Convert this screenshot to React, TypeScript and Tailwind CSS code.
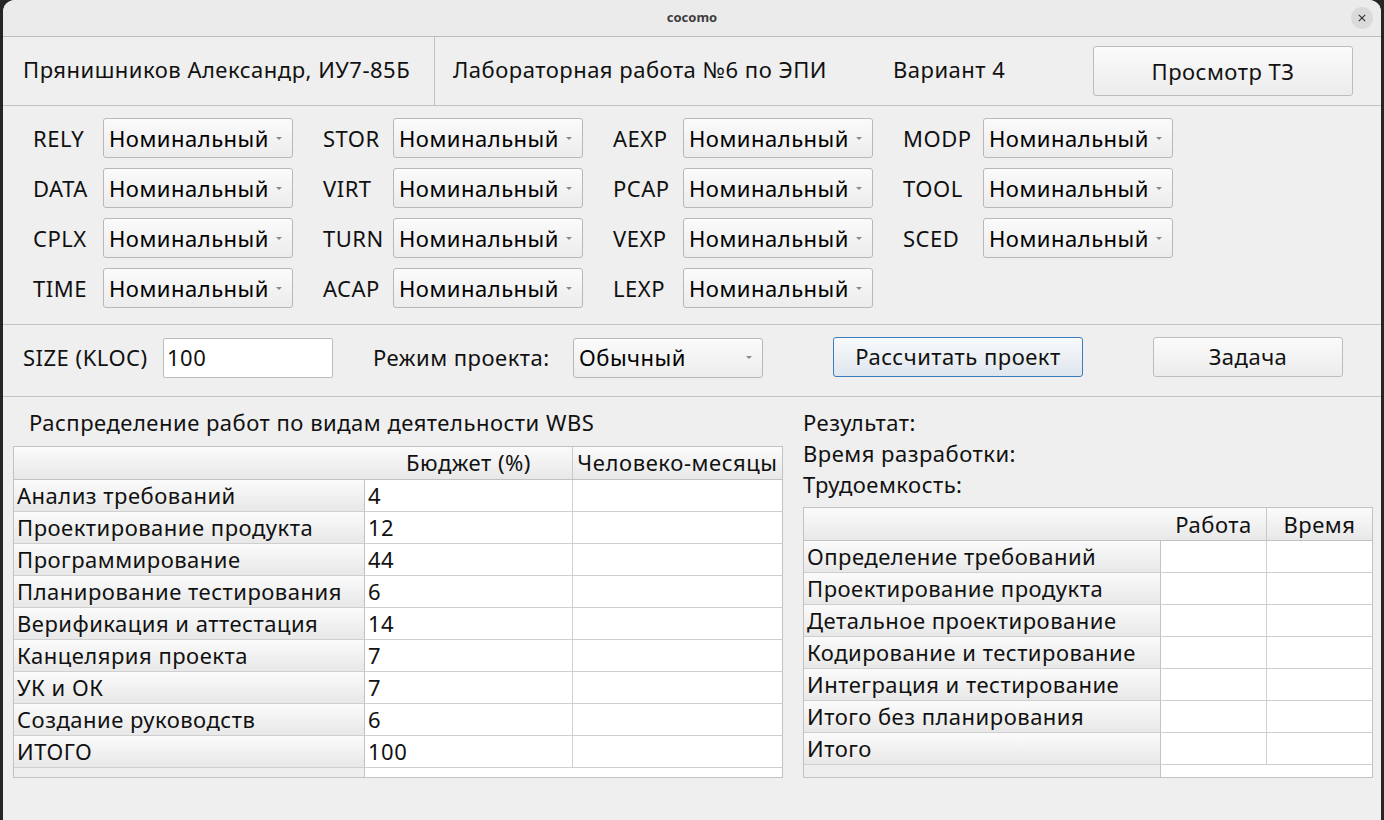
import React from 'react';

const font = { fontFamily: '"Noto Sans", "DejaVu Sans", sans-serif' };

function Combo({ value, width = 'w-[190px]' }: { value: string; width?: string }) {
  return (
    <div
      className={`${width} h-[40px] flex items-center justify-between pl-[5px] pr-[10px] rounded-[3px] border border-[#b8b8b8] bg-gradient-to-b from-[#fbfbfb] to-[#ececec] text-black`}
    >
      <span className="whitespace-nowrap">{value}</span>
      <span className="w-0 h-0 border-l-[3px] border-r-[3px] border-t-[3px] border-l-transparent border-r-transparent border-t-[#8a8a8a]" />
    </div>
  );
}

function Param({ label, labelW = 'w-[70px]' }: { label: string; labelW?: string }) {
  return (
    <div className="flex items-center">
      <span className={`${labelW}`}>{label}</span>
      <Combo value="Номинальный" />
    </div>
  );
}

const columns: string[][] = [
  ['RELY', 'DATA', 'CPLX', 'TIME'],
  ['STOR', 'VIRT', 'TURN', 'ACAP'],
  ['AEXP', 'PCAP', 'VEXP', 'LEXP'],
  ['MODP', 'TOOL', 'SCED'],
];

const wbs: [string, string][] = [
  ['Анализ требований', '4'],
  ['Проектирование продукта', '12'],
  ['Программирование', '44'],
  ['Планирование тестирования', '6'],
  ['Верификация и аттестация', '14'],
  ['Канцелярия проекта', '7'],
  ['УК и ОК', '7'],
  ['Создание руководств', '6'],
  ['ИТОГО', '100'],
];

const stages = [
  'Определение требований',
  'Проектирование продукта',
  'Детальное проектирование',
  'Кодирование и тестирование',
  'Интеграция и тестирование',
  'Итого без планирования',
  'Итого',
];

const headCell = 'bg-gradient-to-b from-[#fbfbfb] to-[#e8e8e8]';

export default function App() {
  return (
    <div className="w-[1384px] h-[820px] bg-[#262626] flex px-[3px] overflow-hidden text-[#111]" style={font}>
      <div className="flex-1 flex flex-col bg-[#efefef] rounded-t-[12px] overflow-hidden text-[22px] tracking-[0.5px]">
        {/* title bar */}
        <div className="h-[37px] shrink-0 flex items-center justify-center relative bg-[#ebebeb] border-b border-[#bcbcbc] tracking-normal">
          <span className="text-[13px] font-bold text-[#3d3d3d]">cocomo</span>
          <div className="absolute right-[8px] top-[7px] w-[22px] h-[22px] rounded-full bg-[#dadada] flex items-center justify-center">
            <svg viewBox="0 0 10 10" className="w-[8px] h-[8px]" stroke="#333" strokeWidth="1.4">
              <line x1="1" y1="1" x2="9" y2="9" />
              <line x1="9" y1="1" x2="1" y2="9" />
            </svg>
          </div>
        </div>

        {/* header */}
        <div className="h-[69px] shrink-0 flex items-center border-b border-[#c2c2c2]">
          <div className="w-[432px] h-full flex items-center pl-[20px] pb-[4px] border-r border-[#c2c2c2] whitespace-nowrap">
            Прянишников Александр, ИУ7-85Б
          </div>
          <div className="pl-[18px] w-[458px] pb-[4px] whitespace-nowrap">Лабораторная работа №6 по ЭПИ</div>
          <div className="w-[200px] pb-[4px]">Вариант 4</div>
          <button className="w-[260px] h-[50px] rounded-[3px] border border-[#bdbdbd] bg-gradient-to-b from-[#fbfbfb] to-[#ececec]">
            Просмотр ТЗ
          </button>
        </div>

        {/* parameters */}
        <div className="h-[219px] shrink-0 flex pl-[30px] pt-[12px] border-b border-[#c2c2c2]">
          {columns.map((col, i) => (
            <div key={i} className={`flex flex-col gap-[10px] ${i < 3 ? 'w-[290px]' : ''}`}>
              {col.map((p) => (
                <Param key={p} label={p} labelW={i === 3 ? 'w-[80px]' : 'w-[70px]'} />
              ))}
            </div>
          ))}
        </div>

        {/* size / mode */}
        <div className="h-[72px] shrink-0 flex items-center pl-[20px] pb-[6px] border-b border-[#c2c2c2]">
          <span className="w-[140px] whitespace-nowrap">SIZE (KLOC)</span>
          <div className="w-[170px] h-[40px] bg-white border border-[#bdbdbd] rounded-[2px] flex items-center pl-[3px]">100</div>
          <span className="ml-[40px] w-[200px] whitespace-nowrap">Режим проекта:</span>
          <Combo value="Обычный" />
          <button className="ml-[70px] w-[250px] h-[40px] -mt-[2px] rounded-[3px] border border-[#3a7cbd] bg-gradient-to-b from-[#f8fafc] to-[#dfe6ee] whitespace-nowrap">
            Рассчитать проект
          </button>
          <button className="ml-[70px] w-[190px] h-[40px] -mt-[2px] rounded-[3px] border border-[#bdbdbd] bg-gradient-to-b from-[#fbfbfb] to-[#ececec]">
            Задача
          </button>
        </div>

        {/* bottom */}
        <div className="flex-1 flex">
          <div className="w-[800px] pl-[10px] pt-[13px]">
            <div className="pl-[16px] h-[24px] leading-[24px] whitespace-nowrap">Распределение работ по видам деятельности WBS</div>
            <div className="mt-[12px] w-[770px] border border-[#c2c2c2] bg-white">
              <div className={`flex h-[33px] border-b border-[#c2c2c2] ${headCell}`}>
                <div className="w-[351px]" />
                <div className="w-[208px] text-center leading-[31px] border-r border-[#c8c8c8] whitespace-nowrap">Бюджет (%)</div>
                <div className="flex-1 text-center leading-[31px] whitespace-nowrap tracking-[0.6px]">Человеко-месяцы</div>
              </div>
              {wbs.map(([name, v]) => (
                <div key={name} className="flex h-[32px] border-b border-[#cfcfcf]">
                  <div className={`w-[351px] pl-[3px] leading-[31px] border-r border-[#c2c2c2] whitespace-nowrap overflow-hidden ${headCell}`}>{name}</div>
                  <div className="w-[208px] pl-[3px] leading-[31px] border-r border-[#cfcfcf]">{v}</div>
                  <div className="flex-1" />
                </div>
              ))}
              <div className="flex h-[9px]">
                <div className="w-[351px] bg-[#eeeeee] border-r border-[#c2c2c2]" />
              </div>
            </div>
          </div>

          <div className="w-[571px] pt-[12px]">
            <div className="h-[30px] leading-[26px]">Результат:</div>
            <div className="h-[30px] leading-[28px]">Время разработки:</div>
            <div className="h-[30px] leading-[30px]">Трудоемкость:</div>
            <div className="mt-[8px] w-[570px] border border-[#c2c2c2] bg-white">
              <div className={`flex h-[33px] border-b border-[#c2c2c2] ${headCell}`}>
                <div className="w-[357px]" />
                <div className="w-[106px] text-center leading-[33px] border-r border-[#c8c8c8]">Работа</div>
                <div className="flex-1 text-center leading-[33px]">Время</div>
              </div>
              {stages.map((s) => (
                <div key={s} className="flex h-[32px] border-b border-[#cfcfcf]">
                  <div className={`w-[357px] pl-[3px] leading-[31px] border-r border-[#c2c2c2] whitespace-nowrap overflow-hidden ${headCell}`}>{s}</div>
                  <div className="w-[106px] border-r border-[#cfcfcf]" />
                  <div className="flex-1" />
                </div>
              ))}
              <div className="flex h-[12px]">
                <div className="w-[357px] bg-[#eeeeee] border-r border-[#c2c2c2]" />
              </div>
            </div>
          </div>
        </div>
      </div>
    </div>
  );
}
